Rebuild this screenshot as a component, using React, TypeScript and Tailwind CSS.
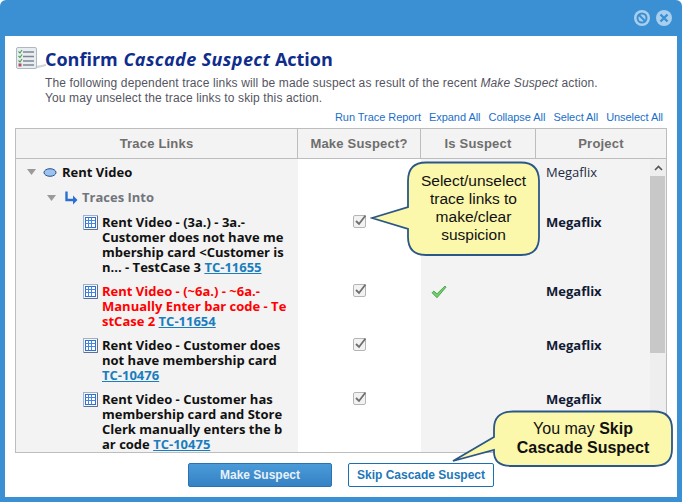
const rows = [
  {
    lines: ["Rent Video - (3a.) - 3a.-", "Customer does not have me", "mbership card <Customer is", "n... - TestCase 3 "],
    id: "TC-11655",
    red: false,
    suspect: false,
    height: "h-[69px]",
  },
  {
    lines: ["Rent Video - (~6a.) - ~6a.-", "Manually Enter bar code - Te", "stCase 2 "],
    id: "TC-11654",
    red: true,
    suspect: true,
    height: "h-[54px]",
  },
  {
    lines: ["Rent Video - Customer does", "not have membership card", ""],
    id: "TC-10476",
    red: false,
    suspect: false,
    height: "h-[54px]",
  },
  {
    lines: ["Rent Video - Customer has", "membership card and Store", "Clerk manually enters the b", "ar code "],
    id: "TC-10475",
    red: false,
    suspect: false,
    height: "h-[65px]",
  },
];

function Triangle() {
  return (
    <svg width="9" height="6" viewBox="0 0 9 6" className="shrink-0">
      <path d="M0 0H9L4.5 6Z" fill="#9a9a9a" />
    </svg>
  );
}

function GridIcon() {
  return (
    <svg width="15" height="15" viewBox="0 0 15 15" className="shrink-0">
      <rect x="0.5" y="0.5" width="14" height="14" fill="#f4f7fb" stroke="#9fb0c8" />
      <rect x="2.5" y="2.5" width="10" height="10" fill="#fff" stroke="#2f6fd0" />
      <path d="M5.5 2.5V12.5M8.5 2.5V12.5M2.5 5.5H12.5M2.5 8.5H12.5" stroke="#4a86dc" />
      <path d="M1 14.5H14.5V1" fill="none" stroke="#5f6f8c" />
    </svg>
  );
}

function Checkbox() {
  return (
    <svg width="14" height="14" viewBox="0 0 14 14">
      <rect x="0.5" y="1.5" width="12" height="12" rx="1.5" fill="#f2f2f2" stroke="#b5b5b5" />
      <path d="M3 7L6 10L12.5 1.5" fill="none" stroke="#6e6e6e" strokeWidth="1.8" />
    </svg>
  );
}

function Callout({ className, path, width, height, children }: { className: string; path: string; width: number; height: number; children: React.ReactNode }) {
  return (
    <div className={`absolute ${className}`} style={{ width, height }}>
      <svg width={width} height={height} className="absolute inset-0">
        <path d={path} fill="#fbf7ab" stroke="#2a5787" strokeWidth="1.8" />
      </svg>
      {children}
    </div>
  );
}

export default function App() {
  return (
    <div className="relative w-[682px] h-[502px] overflow-hidden bg-[#3b8fd3] rounded-t-md pl-[5px] pr-[5px] pt-[36px] pb-[5px] font-['Liberation_Sans',sans-serif]">
      {/* window buttons */}
      <div className="absolute top-[10px] right-[10px] flex gap-[6px]">
        <svg width="16" height="16" viewBox="0 0 16 16">
          <circle cx="8" cy="8" r="8" fill="#a9cfee" />
          <circle cx="8" cy="8" r="4.5" fill="none" stroke="#3b8fd3" strokeWidth="2" />
          <path d="M5 5L11 11" stroke="#3b8fd3" strokeWidth="2" />
        </svg>
        <svg width="16" height="16" viewBox="0 0 16 16">
          <circle cx="8" cy="8" r="8" fill="#a9cfee" />
          <path d="M4.5 4.5L11.5 11.5M11.5 4.5L4.5 11.5" stroke="#3b8fd3" strokeWidth="2.4" />
        </svg>
      </div>

      <div className="flex flex-col h-full bg-white px-[10px]">
        {/* heading */}
        <div className="flex items-start pt-[11px] h-[40px]">
          <svg width="30" height="22" viewBox="0 0 30 22" className="shrink-0 ml-px">
            <path d="M20 19L30 17V19L20 21.5Z" fill="#d3d5d8" />
            <rect x="0.5" y="0.5" width="20" height="21" rx="1.5" fill="#e8edf2" stroke="#aeb8c2" />
            <path d="M7 5H18M7 9.5H18M7 14H18M7 18H18" stroke="#7d8791" strokeWidth="1.5" />
            <path d="M2.5 4.5L4 6L6 3M2.5 9L4 10.5L6 7.5M2.5 13.5L4 15L6 12" fill="none" stroke="#4ba048" strokeWidth="1.1" />
            <rect x="2.5" y="16.5" width="3" height="3" fill="#b8505a" />
          </svg>
          <h1 className="ml-[-1px] text-[18px] leading-[24px] font-bold text-[#0f2d8c] font-['Open_Sans',sans-serif] whitespace-nowrap">
            Confirm <i className="ml-[1px] tracking-[0.4px]">Cascade Suspect</i> Action
          </h1>
        </div>

        <p className="ml-[30px] text-[12px] leading-[15px] text-[#55555f] tracking-[0.13px] whitespace-nowrap">
          The following dependent trace links will be made suspect as result of the recent <i>Make Suspect</i> action.
          <br />
          You may unselect the trace links to skip this action.
        </p>

        <div className="flex justify-end gap-[8px] pr-[4px] mt-[3px] h-[16px] text-[11px] leading-[16px] tracking-[-0.05px] text-[#1a6fc9] whitespace-nowrap">
          <span>Run Trace Report</span>
          <span>Expand All</span>
          <span>Collapse All</span>
          <span>Select All</span>
          <span>Unselect All</span>
        </div>

        {/* table */}
        <div className="mt-[3px] w-[652px] h-[325px] border border-[#bdbdbd] flex flex-col">
          <div className="grid grid-cols-[282px_123px_115px_1fr] h-[30px] shrink-0 bg-[#f3f3f3] border-b border-[#bdbdbd] text-[13px] font-bold text-[#6e6e6e] text-center leading-[29px] tracking-[0.2px]">
            <div className="border-r border-[#bdbdbd]">Trace Links</div>
            <div className="border-r border-[#bdbdbd]">Make Suspect?</div>
            <div className="border-r border-[#bdbdbd]">Is Suspect</div>
            <div>Project</div>
          </div>

          <div className="flex flex-1 min-h-0 font-['Open_Sans',sans-serif] text-[13px] leading-[15px]">
            <div className="grid grid-cols-[282px_123px_115px_114px] content-start w-[634px] overflow-hidden">
              <div className="h-[26px] bg-[#f3f3f3] flex items-center pl-[11px] font-bold text-[#111]">
                <Triangle />
                <svg width="14" height="9" viewBox="0 0 14 9" className="ml-[7px] mr-[5px]">
                  <ellipse cx="7" cy="4.5" rx="6" ry="3.8" fill="#9cc2f0" stroke="#2a4f8a" />
                </svg>
                Rent Video
              </div>
              <div className="bg-white" />
              <div className="bg-[#f3f3f3]" />
              <div className="bg-[#f3f3f3] pl-[10px] pt-[6px] text-[#1d2a44]">Megaflix</div>

              <div className="h-[25px] bg-[#f3f3f3] flex items-center pl-[31px] font-bold text-[#71757c]">
                <Triangle />
                <svg width="14" height="14" viewBox="0 0 14 14" className="ml-[8px] mr-[4px]">
                  <path d="M2.5 0.5V9H10" fill="none" stroke="#2c6fd1" strokeWidth="2.4" />
                  <path d="M9 4.5L13.5 9L9 13.5Z" fill="#2c6fd1" />
                </svg>
                Traces Into
              </div>
              <div className="bg-white" />
              <div className="bg-[#f3f3f3]" />
              <div className="bg-[#f3f3f3]" />

              {rows.map((row) => (
                <div key={row.id} className="contents">
                  <div className={`${row.height} bg-[#f3f3f3] flex gap-[4px] pl-[67px] pt-[5px] font-bold whitespace-nowrap ${row.red ? "text-[#ff0000]" : "text-[#111]"}`}>
                    <GridIcon />
                    <div>
                      {row.lines.map((line, index) => (
                        <div key={index} className={line === "" ? "hidden" : ""}>
                          {line}
                          {index === row.lines.length - 1 && (
                            <span className="text-[#1a7dbd] underline">{row.id}</span>
                          )}
                        </div>
                      ))}
                      {row.lines[row.lines.length - 1] === "" && (
                        <div className="text-[#1a7dbd] underline">{row.id}</div>
                      )}
                    </div>
                  </div>
                  <div className="bg-white pl-[55px] pt-[4px]">
                    <Checkbox />
                  </div>
                  <div className="bg-[#f3f3f3] pl-[10px] pt-[5px]">
                    {row.suspect && (
                      <svg width="16" height="14" viewBox="0 0 16 14" className="mt-px">
                        <path d="M1 7.8L2.8 6L6 8.8L14 1L15 2.2L6 12.8Z" fill="#6fd068" stroke="#2f8f34" strokeWidth="0.7" />
                      </svg>
                    )}
                  </div>
                  <div className="bg-[#f3f3f3] pl-[10px] pt-[5px] font-bold text-[#111a33]">Megaflix</div>
                </div>
              ))}
            </div>

            {/* scrollbar */}
            <div className="w-[16px] shrink-0 bg-[#eeeeee] flex flex-col">
              <div className="h-[17px] flex items-center justify-center">
                <svg width="9" height="6" viewBox="0 0 9 6">
                  <path d="M1 5L4.5 1.5L8 5" fill="none" stroke="#555" strokeWidth="1.6" />
                </svg>
              </div>
              <div className="h-[177px] w-[15px] bg-[#c8c8c8]" />
            </div>
          </div>
        </div>

        {/* buttons */}
        <div className="flex justify-center gap-[16px] mt-[10px]">
          <button className="w-[144px] h-[24px] rounded-[2px] border border-[#2a72b0] bg-gradient-to-b from-[#4a9ad8] to-[#3582c4] text-[12px] font-bold text-[#e8f1f9]">
            Make Suspect
          </button>
          <button className="w-[146px] h-[24px] rounded-[2px] border border-[#1c6fb0] bg-white text-[12px] font-bold text-[#2277b8]">
            Skip Cascade Suspect
          </button>
        </div>
      </div>

      {/* callouts */}
      <Callout
        className="left-[370px] top-[161px]"
        width={171}
        height={96}
        path="M56 1.5H151Q169 1.5 169 20V76Q169 94 151 94H56Q38 94 38 76V68L2 57L38 46V20Q38 1.5 56 1.5Z"
      >
        <div className="absolute left-[38px] top-[11px] w-[131px] text-center text-[15.5px] leading-[18px] text-[#111]">
          Select/unselect
          <br />
          trace links to
          <br />
          make/clear
          <br />
          suspicion
        </div>
      </Callout>
      <Callout
        className="left-[451px] top-[410px]"
        width={223}
        height={58}
        path="M62 1.5H203Q221 1.5 221 19V39Q221 56 203 56H61Q43 56 43 42V40L2 51L43 27V19Q43 1.5 62 1.5Z"
      >
        <div className="absolute left-[43px] top-[9px] w-[178px] text-center text-[16px] leading-[19px] text-[#111]">
          You may <b>Skip</b>
          <br />
          <b>Cascade Suspect</b>
        </div>
      </Callout>
    </div>
  );
}
